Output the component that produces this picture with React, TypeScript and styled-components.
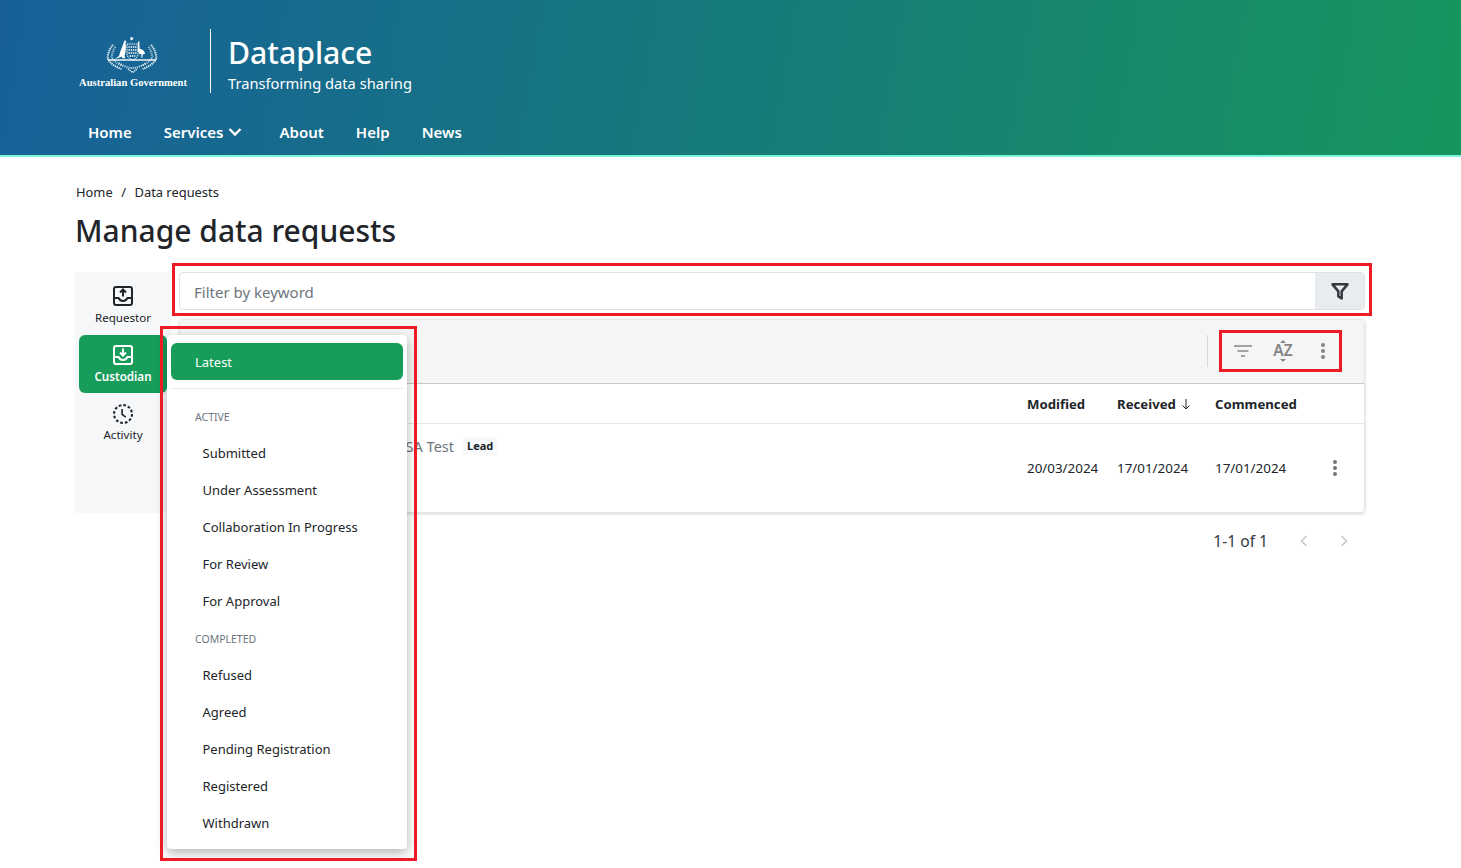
import React from "react";
import styled, { createGlobalStyle } from "styled-components";

const GlobalStyle = createGlobalStyle`
  html, body {
    margin: 0;
    padding: 0;
    background: #ffffff;
    color: #212529;
    font-family: "Noto Sans", "Open Sans", sans-serif;
  }
  * { box-sizing: border-box; }
`;

const Page = styled.div`
  position: relative;
  width: 100%;
  min-height: 868px;
  overflow: hidden;
`;

const Header = styled.header`
  height: 157px;
  padding: 29px 0 0 79px;
  background: linear-gradient(100deg, #17609a 0%, #167a7a 50%, #16965e 100%);
  border-bottom: 2px solid #7af5d6;
  color: #ffffff;
`;
const Brand = styled.div`
  display: flex;
  height: 64px;
`;
const GovLogo = styled.div`
  width: 132px;
  display: flex;
  flex-direction: column;
  align-items: flex-start;
  padding-top: 7px;
  border-right: 1px solid #ffffff;
`;
const Crest = styled.svg`
  display: block;
  width: 54px;
  height: 38px;
  margin-left: 27px;
`;
const GovName = styled.div`
  margin-top: 2px;
  font-family: "Liberation Serif", serif;
  font-weight: 700;
  font-size: 10.6px;
  line-height: 13px;
  white-space: nowrap;
`;
const BrandText = styled.div`
  padding-left: 17px;
`;
const SiteName = styled.div`
  font-size: 30.2px;
  font-weight: 500;
  line-height: 46px;
  margin-top: 1px;
`;
const Tagline = styled.div`
  font-size: 14.7px;
  line-height: 20px;
  margin-top: -3px;
`;
const Nav = styled.nav`
  display: flex;
  align-items: center;
  margin: 27px 0 0 9px;
  gap: 32px;
`;
const NavLink = styled.a`
  display: flex;
  align-items: center;
  gap: 5px;
  font-size: 15px;
  font-weight: 600;
  line-height: 24px;
  color: #ffffff;
`;
const NavMenuLink = styled(NavLink)`
  margin-right: 5px;
`;

const Main = styled.main`
  padding: 25px 96px 0 75px;
`;
const Breadcrumb = styled.div`
  display: flex;
  gap: 8.5px;
  padding-left: 1px;
  font-size: 12.9px;
  line-height: 20px;
`;
const PageTitle = styled.h1`
  margin: 6px 0 0;
  font-size: 30px;
  font-weight: 500;
  line-height: 46px;
`;
const Workspace = styled.div`
  display: flex;
  gap: 8px;
  margin-top: 18px;
`;
const Sidebar = styled.aside`
  width: 96px;
  height: 241px;
  padding: 4px;
  background: #f6f7f9;
`;
const SideItem = styled.div<{ $active?: boolean }>`
  display: flex;
  flex-direction: column;
  align-items: center;
  height: 58px;
  padding-top: 10px;
  border-radius: 6px;
  font-size: 11.6px;
  line-height: 16px;
  font-weight: ${(p) => (p.$active ? 600 : 400)};
  color: ${(p) => (p.$active ? "#ffffff" : "#212529")};
  background: ${(p) => (p.$active ? "#179c5a" : "transparent")};
  & + & {
    margin-top: 1px;
  }
`;
const TraySvg = styled.svg`
  display: block;
  margin-bottom: 4px;
`;
const ActivitySvg = styled.svg`
  display: block;
  margin: -1px 0 2px;
`;
const Content = styled.div`
  flex: 1;
  min-width: 0;
`;
const SearchRow = styled.div`
  position: relative;
  display: flex;
  height: 38px;
  border: 1px solid #dee2e6;
  border-radius: 4px;
`;
const SearchInput = styled.input`
  flex: 1;
  border: 0;
  outline: 0;
  padding: 1px 14px 0;
  background: transparent;
  font-family: inherit;
  font-size: 15px;
  &::placeholder {
    color: #6c757d;
    opacity: 1;
  }
`;
const SearchButton = styled.div`
  width: 49px;
  display: flex;
  align-items: center;
  justify-content: center;
  background: #e9ecef;
  color: #343a40;
`;
const Card = styled.section`
  margin-top: 9px;
  border: 1px solid #e4e5e7;
  border-radius: 4px;
  box-shadow: 0 1px 3px rgba(0, 0, 0, 0.18);
`;
const Toolbar = styled.div`
  display: flex;
  justify-content: flex-end;
  align-items: center;
  height: 64px;
  padding: 0 31px 2px 0;
  background: #f5f5f5;
  border-bottom: 1px solid #c8c8c8;
`;
const ToolDivider = styled.div`
  width: 1px;
  height: 32px;
  margin-right: 25px;
  background: #d8d8d8;
`;
const ToolGroup = styled.div`
  position: relative;
  display: flex;
  align-items: center;
  gap: 20px;
  color: #858585;
`;
const ToolIcon = styled.div`
  width: 20px;
  height: 24px;
  display: flex;
  align-items: center;
  justify-content: center;
`;
const AzIcon = styled(ToolIcon)`
  position: relative;
  font-size: 15.5px;
  font-weight: 600;
  line-height: 22px;
  padding-bottom: 2px;
  &::before,
  &::after {
    content: "";
    position: absolute;
    left: 7px;
    border-left: 3px solid transparent;
    border-right: 3px solid transparent;
  }
  &::before {
    top: 1px;
    border-bottom: 3px solid #858585;
  }
  &::after {
    bottom: 1px;
    border-top: 3px solid #858585;
  }
`;
const TableRow = styled.div<{ $head?: boolean }>`
  display: grid;
  grid-template-columns: 847px 90px 98px 87px 1fr;
  align-items: center;
  height: ${(p) => (p.$head ? "40px" : "88px")};
  font-size: ${(p) => (p.$head ? "13.2px" : "13.4px")};
  font-weight: ${(p) => (p.$head ? 700 : 400)};
  border-bottom: ${(p) => (p.$head ? "1px solid #e4e5e7" : "0")};
`;
const RequestCell = styled.div`
  display: flex;
  align-items: center;
  gap: 8px;
  margin-top: -45px;
  padding-left: 215px;
`;
const RequestName = styled.span`
  color: #6c757d;
  font-size: 14.5px;
`;
const LeadBadge = styled.span`
  padding: 2px 5px;
  border-radius: 4px;
  background: #f8f9fa;
  font-size: 11px;
  font-weight: 700;
  line-height: 14px;
`;
const SortCell = styled.div`
  display: flex;
  align-items: center;
  gap: 4px;
`;
const RowMenu = styled.div`
  display: flex;
  justify-content: center;
  margin-left: 3px;
  color: #757575;
`;
const Pager = styled.div`
  display: flex;
  align-items: center;
  justify-content: flex-end;
  gap: 24px;
  height: 56px;
  padding-right: 13px;
  font-size: 15.6px;
  color: #343a40;
`;
const PagerText = styled.span`
  margin-right: 4px;
`;
const PagerArrow = styled.span`
  display: flex;
  color: #c4c8cc;
`;

const Menu = styled.div`
  position: absolute;
  top: 335px;
  left: 167px;
  width: 240px;
  height: 514px;
  padding: 8px 4px;
  background: #ffffff;
  border-radius: 4px;
  box-shadow: 0 4px 12px rgba(0, 0, 0, 0.3);
`;
const MenuLatest = styled.div`
  display: flex;
  align-items: center;
  height: 37px;
  padding-left: 24px;
  border-radius: 6px;
  background: #179c5a;
  color: #ffffff;
  font-size: 13px;
`;
const MenuDivider = styled.div`
  height: 1px;
  margin: 8px 0 9px;
  background: #e4e7eb;
`;
const MenuHeading = styled.div`
  display: flex;
  align-items: center;
  height: 37px;
  padding-left: 24px;
  color: #6c757d;
  font-size: 10.5px;
  text-transform: uppercase;
`;
const MenuItem = styled.div`
  display: flex;
  align-items: center;
  height: 37px;
  padding: 0 0 2px 31.5px;
  font-size: 13px;
  color: #212529;
`;

const Mark = styled.div`
  position: absolute;
  border: 3px solid #ed1c24;
  pointer-events: none;
`;
const SearchMark = styled(Mark)`
  top: -10px;
  left: -8px;
  right: -8px;
  bottom: -7px;
`;
const MenuMark = styled(Mark)`
  top: 326px;
  left: 160px;
  width: 257px;
  height: 535px;
`;
const ToolMark = styled(Mark)`
  top: -9px;
  left: -14px;
  right: -9px;
  bottom: -9px;
`;

function TrayIcon({ down }: { down?: boolean }) {
  const arrow = down ? "M12 5.5v7M9 9.5l3 3 3-3" : "M12 12.5v-7M9 8.5l3-3 3 3";
  return (
    <TraySvg width="20" height="20" viewBox="2 2 20 20" fill="none" stroke="currentColor" strokeWidth="2">
      <rect x="3" y="3" width="18" height="18" rx="2" />
      <path d="M3 14h4.5c1 2 2.5 3 4.5 3s3.500-1 4.500-3H21" />
      <path d={arrow} />
    </TraySvg>
  );
}

function ActivityIcon() {
  return (
    <ActivitySvg width="22" height="22" viewBox="0 0 24 24" fill="none" stroke="currentColor" strokeWidth="2.200">
      <circle cx="12" cy="12" r="9.800" strokeDasharray="3 2.130" />
      <path d="M11 6.500v6l4 3" strokeWidth="1.800" />
    </ActivitySvg>
  );
}

function FunnelIcon() {
  return (
    <svg width="20" height="20" viewBox="0 0 24 24" fill="none" stroke="currentColor" strokeWidth="3" strokeLinejoin="round">
      <path d="M3 4h18l-7 8.500V21l-4-2.500v-6z" />
    </svg>
  );
}

function SortLines() {
  return (
    <svg width="20" height="16" viewBox="0 0 20 16" fill="none" stroke="currentColor" strokeWidth="1.700">
      <path d="M1 3h18M4.500 8h11M8 13h4" />
    </svg>
  );
}

function Kebab() {
  return (
    <svg width="6" height="18" viewBox="0 0 6 18" fill="currentColor">
      <circle cx="3" cy="3" r="2" />
      <circle cx="3" cy="9" r="2" />
      <circle cx="3" cy="15" r="2" />
    </svg>
  );
}

function CoatOfArms() {
  return (
    <Crest viewBox="0 0 54 38" fill="#ffffff">
      <path d="M25.700 .8l.7 1 1.200-.2-.7 1 .7 1-1.200-.2-.7 1-.7-1-1.200.2.700-1-.7-1 1.200.2z" />
      <path d="M19 4l1.500 2-1 1 .5 4-.5 5-1 4 1 2-3 .5-.5-2-4 1.500-3 1 4-3 1.500-5 2-5 1-3z" />
      <path d="M32 5.500l2 .3-.7 1 .3 6c2.500.5 5 2 5.500 5l-2.500.8-.3 3.400h-.8l-.2-3.400-2-.8-1.800-3 .5-3z" />
      <path d="M21 8h11v10c0 3-2.500 5-5.500 6-3-1-5.500-3-5.500-6z" fill="none" stroke="#ffffff" strokeWidth="1" strokeDasharray="1.500 .7" />
      <path d="M22.500 11h8M22.500 14h8M22.500 17h8M23.500 20h6" stroke="#ffffff" strokeWidth="1.300" strokeDasharray="1.400 .8" />
      <path d="M7 9c-3 3-5 8-5.500 13 2 5 8 9 14 11M45 9c3 3 5 8 5.500 13-2 5-8 9-14 11" fill="none" stroke="#ffffff" strokeWidth="2" strokeDasharray="1.300 .8" opacity="0.9" />
      <path d="M9.500 11c-2.500 3-3.500 7-4 11 3 3 6 6 11 8M42.500 11c2.500 3 3.500 7 4 11-3 3-6 6-11 8" fill="none" stroke="#ffffff" strokeWidth="2" strokeDasharray="1 1.100" opacity="0.75" />
      <path d="M2 24h48" stroke="#ffffff" strokeWidth="1.300" opacity="0.95" />
      <path d="M13 27c4 3 9 5 13.500 5s9-2 13.500-5" fill="none" stroke="#ffffff" strokeWidth="2" strokeDasharray="1.100 1" opacity="0.8" />
      <path d="M22 33l4.500 3.500L31 33" fill="none" stroke="#ffffff" strokeWidth="1.500" strokeDasharray="1.200 .8" opacity="0.9" />
    </Crest>
  );
}

const activeStatuses = ["Submitted", "Under Assessment", "Collaboration In Progress", "For Review", "For Approval"];
const completedStatuses = ["Refused", "Agreed", "Pending Registration", "Registered", "Withdrawn"];

export default function App() {
  return (
    <Page>
      <GlobalStyle />
      <Header>
        <Brand>
          <GovLogo>
            <CoatOfArms />
            <GovName>Australian Government</GovName>
          </GovLogo>
          <BrandText>
            <SiteName>Dataplace</SiteName>
            <Tagline>Transforming data sharing</Tagline>
          </BrandText>
        </Brand>
        <Nav>
          <NavLink>Home</NavLink>
          <NavMenuLink>
            Services
            <svg width="14" height="14" viewBox="0 0 14 14" fill="none" stroke="currentColor" strokeWidth="2.400">
              <path d="M1.500 4l5.500 5.500L12.500 4" />
            </svg>
          </NavMenuLink>
          <NavLink>About</NavLink>
          <NavLink>Help</NavLink>
          <NavLink>News</NavLink>
        </Nav>
      </Header>

      <Main>
        <Breadcrumb>
          <span>Home</span>
          <span>/</span>
          <span>Data requests</span>
        </Breadcrumb>
        <PageTitle>Manage data requests</PageTitle>
        <Workspace>
          <Sidebar>
            <SideItem>
              <TrayIcon />
              Requestor
            </SideItem>
            <SideItem $active>
              <TrayIcon down />
              Custodian
            </SideItem>
            <SideItem>
              <ActivityIcon />
              Activity
            </SideItem>
          </Sidebar>
          <Content>
            <SearchRow>
              <SearchInput placeholder="Filter by keyword" />
              <SearchButton>
                <FunnelIcon />
              </SearchButton>
              <SearchMark />
            </SearchRow>
            <Card>
              <Toolbar>
                <ToolDivider />
                <ToolGroup>
                  <ToolIcon>
                    <SortLines />
                  </ToolIcon>
                  <AzIcon>AZ</AzIcon>
                  <ToolIcon>
                    <Kebab />
                  </ToolIcon>
                  <ToolMark />
                </ToolGroup>
              </Toolbar>
              <TableRow $head>
                <div />
                <div>Modified</div>
                <SortCell>
                  Received
                  <svg width="12" height="12" viewBox="0 0 12 12" fill="none" stroke="currentColor" strokeWidth="1">
                    <path d="M6 1v10M2.500 7.500L6 11l3.500-3.500" />
                  </svg>
                </SortCell>
                <div>Commenced</div>
              </TableRow>
              <TableRow>
                <RequestCell>
                  <RequestName>DSA Test</RequestName>
                  <LeadBadge>Lead</LeadBadge>
                </RequestCell>
                <div>20/03/2024</div>
                <div>17/01/2024</div>
                <div>17/01/2024</div>
                <RowMenu>
                  <Kebab />
                </RowMenu>
              </TableRow>
            </Card>
            <Pager>
              <PagerText>1-1 of 1</PagerText>
              <PagerArrow>
                <svg width="16" height="16" viewBox="0 0 16 16" fill="none" stroke="currentColor" strokeWidth="1.600">
                  <path d="M10.500 3L5.500 8l5 5" />
                </svg>
              </PagerArrow>
              <PagerArrow>
                <svg width="16" height="16" viewBox="0 0 16 16" fill="none" stroke="currentColor" strokeWidth="1.600">
                  <path d="M5.500 3l5 5-5 5" />
                </svg>
              </PagerArrow>
            </Pager>
          </Content>
        </Workspace>
      </Main>

      <Menu>
        <MenuLatest>Latest</MenuLatest>
        <MenuDivider />
        <MenuHeading>Active</MenuHeading>
        {activeStatuses.map((s) => (
          <MenuItem key={s}>{s}</MenuItem>
        ))}
        <MenuHeading>Completed</MenuHeading>
        {completedStatuses.map((s) => (
          <MenuItem key={s}>{s}</MenuItem>
        ))}
      </Menu>
      <MenuMark />
    </Page>
  );
}
